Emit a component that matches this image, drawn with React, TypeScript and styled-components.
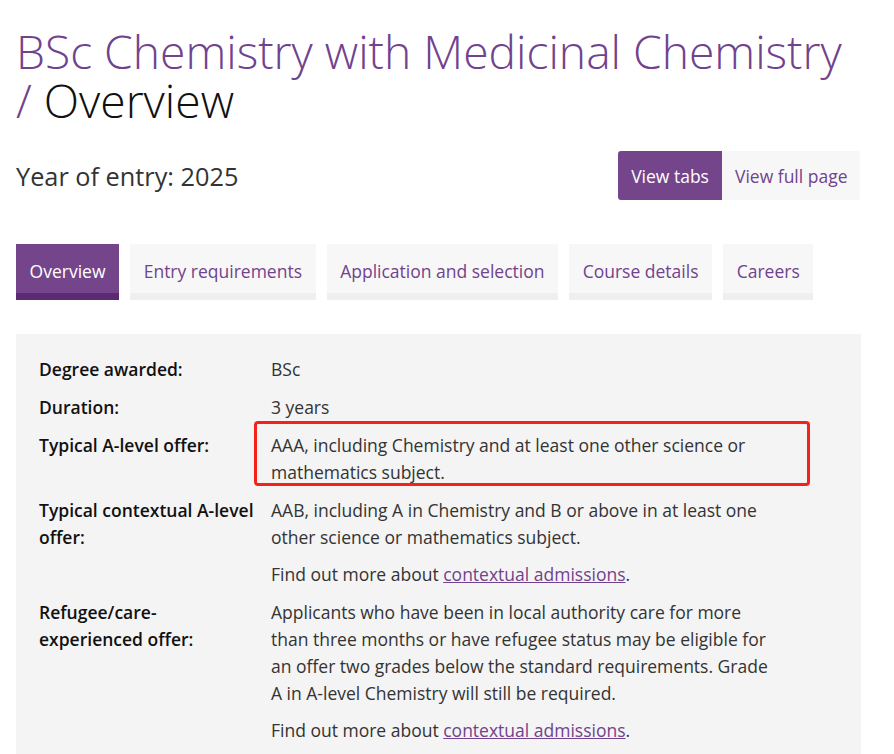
import styled, { createGlobalStyle } from 'styled-components';

const GlobalStyle = createGlobalStyle`
  body {
    margin: 0;
    background: #fff;
    font-family: 'Open Sans', 'Noto Sans', sans-serif;
    color: #333;
  }
`;

const purple = '#71428d';

const Page = styled.div`
  width: 845px;
  padding: 0 0 0 16px;
  position: relative;
`;

const Title = styled.h1`
  margin: 27px 0 0;
  font-size: 46.2px;
  line-height: 49px;
  font-weight: 300;
  color: ${purple};
`;

const Crumb = styled.span`
  color: #111;
`;

const HeaderRow = styled.div`
  display: flex;
  align-items: center;
  justify-content: space-between;
  margin-top: 26px;
`;

const Year = styled.h2`
  margin: 0;
  font-size: 25.3px;
  font-weight: 400;
  color: #333;
`;

const ViewToggle = styled.div`
  display: flex;
  border-radius: 3px;
  overflow: hidden;
  margin-right: 1px;
`;

const ToggleButton = styled.button<{ $active?: boolean }>`
  border: none;
  font-family: inherit;
  font-size: 17.5px;
  height: 49px;
  padding: 0 ${(p) => (p.$active ? '13.5px' : '12.5px')};
  background: ${(p) => (p.$active ? '#74458b' : '#f7f7f7')};
  color: ${(p) => (p.$active ? '#fff' : purple)};
  cursor: pointer;
`;

const Tabs = styled.nav`
  display: flex;
  gap: 11px;
  margin-top: 44px;
`;

const Tab = styled.a<{ $active?: boolean }>`
  display: block;
  height: 49px;
  line-height: 54px;
  padding: 0 13.6px;
  font-size: 17.5px;
  text-decoration: none;
  background: ${(p) => (p.$active ? '#74458b' : '#f7f7f7')};
  color: ${(p) => (p.$active ? '#fff' : purple)};
  border-bottom: 7px solid ${(p) => (p.$active ? '#5b2a73' : '#efefef')};
`;

const Panel = styled.section`
  margin-top: 34px;
  background: #f4f4f4;
  padding: 22px 23px 20px;
  position: relative;
`;

const Facts = styled.dl`
  display: grid;
  grid-template-columns: 219px 505px;
  column-gap: 13px;
  row-gap: 11px;
  margin: 0;
  font-size: 17.5px;
  line-height: 27px;
`;

const Label = styled.dt`
  font-weight: 600;
  color: #111;
`;

const Value = styled.dd`
  margin: 0;
  color: #333;

  p {
    margin: 0;
  }
  p + p {
    margin-top: 10px;
  }
  a {
    color: ${purple};
  }
`;

const Highlight = styled.div`
  position: absolute;
  left: 238px;
  top: 87px;
  width: 550px;
  height: 59px;
  border: 3px solid #f5221b;
  border-radius: 4px;
  pointer-events: none;
`;

const tabs = [
  'Overview',
  'Entry requirements',
  'Application and selection',
  'Course details',
  'Careers',
];

export default function App() {
  return (
    <>
      <GlobalStyle />
      <Page>
        <Title>
          BSc Chemistry with Medicinal Chemistry
          <br />/ <Crumb>Overview</Crumb>
        </Title>

        <HeaderRow>
          <Year>Year of entry: 2025</Year>
          <ViewToggle>
            <ToggleButton $active>View tabs</ToggleButton>
            <ToggleButton>View full page</ToggleButton>
          </ViewToggle>
        </HeaderRow>

        <Tabs>
          {tabs.map((t, i) => (
            <Tab key={t} href="#" $active={i === 0}>
              {t}
            </Tab>
          ))}
        </Tabs>

        <Panel>
          <Facts>
            <Label>Degree awarded:</Label>
            <Value>BSc</Value>

            <Label>Duration:</Label>
            <Value>3 years</Value>

            <Label>Typical A-level offer:</Label>
            <Value>
              AAA, including Chemistry and at least one other science or
              mathematics subject.
            </Value>

            <Label>Typical contextual A-level offer:</Label>
            <Value>
              <p>
                AAB, including A in Chemistry and B or above in at least one
                other science or mathematics subject.
              </p>
              <p>
                Find out more about <a href="#">contextual admissions</a>.
              </p>
            </Value>

            <Label>Refugee/care-experienced offer:</Label>
            <Value>
              <p>
                Applicants who have been in local authority care for more than
                three months or have refugee status may be eligible for an
                offer two grades below the standard requirements. Grade A in
                A-level Chemistry will still be required.
              </p>
              <p>
                Find out more about <a href="#">contextual admissions</a>.
              </p>
            </Value>
          </Facts>
          <Highlight />
        </Panel>
      </Page>
    </>
  );
}
